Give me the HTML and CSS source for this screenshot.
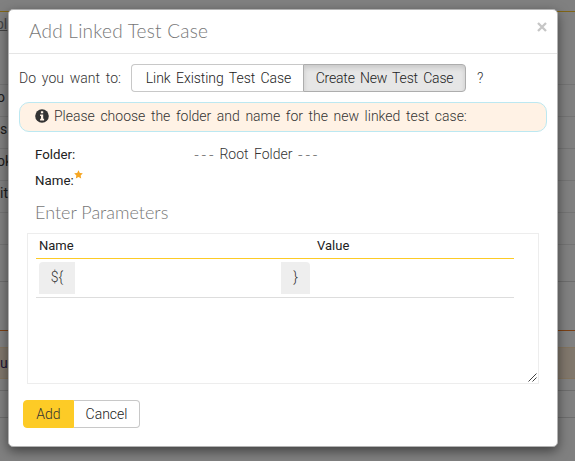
FILE: index.html
```html
<!DOCTYPE html>
<html lang="en">
<head>
<meta charset="utf-8">
<title>Add Linked Test Case</title>
<link rel="stylesheet" href="styles.css">
</head>
<body>
<div class="page">
  <div class="row r-top"></div>
  <div class="row r-head"><span class="link">pl</span></div>
  <div class="row pull">o</div>
  <div class="row">s</div>
  <div class="row pull">ok</div>
  <div class="row">it</div>
  <div class="row"></div>
  <div class="row r-gap"></div>
  <div class="row r-orange"></div>
  <div class="row r-space"></div>
  <div class="row r-band">u</div>
  <div class="row r-thin"></div>
  <div class="row r-last"></div>
</div>
<div class="modal">
  <div class="header">
    <h1 class="title">Add Linked Test Case</h1>
    <svg class="close" viewBox="0 0 10 10"><path d="M1 1L9 9M9 1L1 9"/></svg>
  </div>
  <div class="question">
    <span class="ask">Do you want to:</span>
    <div class="group">
      <button class="btn first">Link Existing Test Case</button>
      <button class="btn active">Create New Test Case</button>
    </div>
    <span class="mark">?</span>
  </div>
  <div class="alert">
    <svg class="info" viewBox="0 0 14 14"><circle cx="7" cy="7" r="6.8"/><path d="M5.900 2.200h2.300v2H5.900zM5.100 5.400h3.100v4.400h.9v1.600h-4V9.800h.9V7h-.9z"/></svg>
    <span class="t-alert">Please choose the folder and name for the new linked test case:</span>
  </div>
  <div class="field"><span class="label t-folder">Folder:</span><span class="value"><span class="dashes">---</span> Root Folder <span class="dashes">---</span></span></div>
  <div class="field"><span class="label t-name">Name:</span><svg class="star" viewBox="0 0 10 10"><path d="M5 .2L6.500 3.200L9.800 3.700L7.400 6L8 9.400L5 7.800L2 9.400L2.600 6L.2 3.700L3.500 3.200Z"/></svg></div>
  <h2 class="subtitle">Enter Parameters</h2>
  <div class="panel">
    <div class="thead"><span class="col">Name</span><span>Value</span></div>
    <div class="trow"><span class="addon left">${</span><span class="addon right">}</span></div>
    <svg class="grip" viewBox="0 0 9 9"><path d="M.5 8.500L8.500 .5M4.500 8.500L8.500 4.500"/></svg>
  </div>
  <div class="group footer">
    <button class="btn primary">Add</button>
    <button class="btn cancel">Cancel</button>
  </div>
</div>
</body>
</html>
```
FILE: styles.css
```css
* { box-sizing: border-box; }
body { margin: 0; width: 575px; height: 461px; overflow: hidden; background: #808080; color: #333; font: 300 14px/20px Roboto, "Open Sans", sans-serif; }
.page { width: 575px; display: flex; flex-direction: column; color: #1b1b1b; font-weight: 400; }
.row { height: 32px; flex: none; border-bottom: 1px solid #747474; line-height: 25px; font-size: 14px; white-space: nowrap; display: flex; width: 575px; }
.pull { text-indent: -3px; }
.r-top { height: 12px; border-color: #806516; }
.r-head { height: 73px; line-height: 24px; }
.link { text-decoration: underline; color: #444; margin-left: -4px; }
.r-gap { height: 37px; border-color: #6d6d6d; }
.r-orange { height: 49px; border-color: #7b4015; }
.r-space { height: 16px; border: 0; }
.r-band { height: 32px; background: #80776c; border-top: 1px solid #83745f; border-color: #83745f; line-height: 30px; color: #201435; }
.r-thin { height: 12px; border-color: #6d6d6d; }
.r-last { height: 27px; border-color: #6d6d6d; }

.modal { position: absolute; left: 8px; top: 9px; width: 550px; height: 438px; background: #fff; border: 1px solid #b3b3b3; border-radius: 5px; box-shadow: 0 4px 12px rgba(0,0,0,.5); }
.header { height: 44px; border-bottom: 1px solid #e5e5e5; display: flex; justify-content: space-between; padding: 11px 10px 0 20px; }
.title, .subtitle { margin: 0; font-family: Lato, sans-serif; font-weight: 300; color: #777; white-space: nowrap; }
.title { font-size: 19px; line-height: 20px; letter-spacing: .24px; }
.close { width: 10px; height: 10px; stroke: #c6c6c6; stroke-width: 2.300; margin-top: 1px; }
.question { display: flex; align-items: center; margin: 10px 0 0 10px; height: 28px; white-space: nowrap; }
.ask { width: 112px; word-spacing: 2.400px; padding-bottom: 1px; }
.group { display: flex; }
.btn { height: 28px; margin: 0; padding: 0 0 1px; border: 1px solid #c8c8c8; background: #fff; color: #222; font: inherit; display: flex; align-items: center; justify-content: center; white-space: nowrap; }
.first { width: 172px; border-radius: 4px 0 0 4px; border-right: 0; word-spacing: 2px; padding-left: 2px; letter-spacing: -.05px; }
.active { width: 163px; border-color: #adadad; border-radius: 0 4px 4px 0; background: #e6e6e6; box-shadow: inset 0 3px 5px rgba(0,0,0,.125); word-spacing: 2px; letter-spacing: -.18px; }
.mark { margin-left: 11px; color: #333; padding-bottom: 1px; }
.alert { display: flex; align-items: center; width: 528px; height: 30px; margin: 10px 0 0 10px; padding: 0 0 2px 15px; border: 1px solid #bce8f1; border-radius: 10px; background: #fff2e5; white-space: nowrap; word-spacing: 2.150px; }
.info { width: 14px; height: 14px; margin-right: 5px; fill: #333; }
.info path { fill: #fff2e5; }
.field { display: flex; height: 26px; margin-left: 26px; white-space: nowrap; }
.alert + .field { margin-top: 13px; }
.label { color: #222; font-weight: 400; font-size: 13.300px; }
.t-folder { width: 159px; }
.value { word-spacing: 2px; margin-top: -1px; }
.dashes { font-family: "DejaVu Sans", sans-serif; letter-spacing: 2.300px; margin-right: -2px; }
.star { width: 9px; height: 9px; fill: #f6a623; margin-top: -1px; }
.subtitle { margin: 3px 0 0 26px; height: 23px; font-size: 18px; line-height: 24px; }
.panel { display: grid; grid-template-rows: 25px 39px 1fr; width: 512px; height: 151px; margin: 10px 0 0 18px; padding: 0 24px 0 8px; border: 1px solid #ededed; }
.thead { display: flex; align-items: center; border-bottom: 1px solid #fdcb26; padding-left: 3px; font-size: 13px; font-weight: 400; color: #222; }
.col { width: 278px; }
.trow { display: flex; justify-content: flex-start; padding: 3px; border-bottom: 1px solid #ddd; }
.addon { height: 32px; display: flex; align-items: center; justify-content: center; background: #eee; color: #333; padding-bottom: 3px; }
.left { width: 36px; border-radius: 4px 0 0 0; }
.right { width: 29px; margin-left: 206px; border-radius: 0 4px 0 0; }
.grip { width: 9px; height: 9px; stroke: #444; stroke-width: 1; fill: none; align-self: end; justify-self: end; margin: 0 -23px 1px 0; }
.footer { margin: 16px 0 0 14px; }
.primary { width: 51px; border-color: #fdcb26; background: #fdcb26; border-radius: 4px 0 0 4px; color: #333; }
.cancel { width: 66px; border-radius: 0 4px 4px 0; border-left: 0; }
```
